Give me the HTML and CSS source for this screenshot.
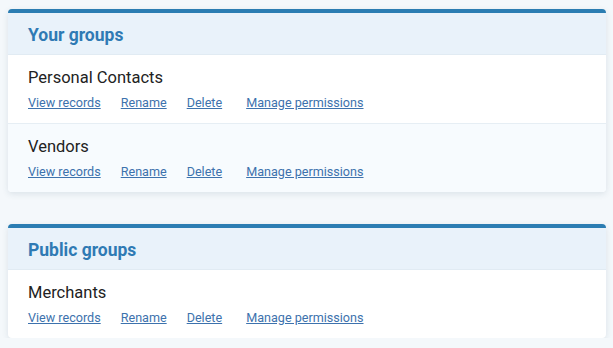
FILE: index.html
```html
<!DOCTYPE html>
<html lang="en">
<head>
    <meta charset="UTF-8">
    <meta name="viewport" content="width=device-width, initial-scale=1.0">
    <title>Groups</title>
    <link rel="stylesheet" href="styles.css">
</head>
<body>
    <div class="group-card">
        <h2 class="group-card-title">Your groups</h2>
        <div class="group-row">
            <div class="group-name">Personal Contacts</div>
            <div class="group-links">
                <a href="#">View records</a>
                <a href="#">Rename</a>
                <a href="#">Delete</a>
                <a href="#">Manage permissions</a>
            </div>
        </div>
        <div class="group-row alt">
            <div class="group-name">Vendors</div>
            <div class="group-links">
                <a href="#">View records</a>
                <a href="#">Rename</a>
                <a href="#">Delete</a>
                <a href="#">Manage permissions</a>
            </div>
        </div>
    </div>

    <div class="group-card">
        <h2 class="group-card-title">Public groups</h2>
        <div class="group-row">
            <div class="group-name">Merchants</div>
            <div class="group-links">
                <a href="#">View records</a>
                <a href="#">Rename</a>
                <a href="#">Delete</a>
                <a href="#">Manage permissions</a>
            </div>
        </div>
    </div>
</body>
</html>
```

FILE: styles.css
```css
body {
    font-family: Roboto, "Liberation Sans", sans-serif;
    background-color: #f4f8fb;
    margin: 0;
    padding: 9px 7px 0 8px;
}
.group-card {
    background-color: #fff;
    border-top: 4px solid #2b7db2;
    border-radius: 4px;
    box-shadow: 0 2px 6px rgba(40, 70, 100, 0.12);
    margin-bottom: 32px;
    overflow: hidden;
}
.group-card:last-child {
    margin-bottom: 0;
}
.group-card-title {
    margin: 0;
    padding: 11px 20px 8px;
    line-height: 22px;
    font-size: 17.5px;
    font-weight: bold;
    color: #2f7ab4;
    background-color: #e9f2fa;
    border-bottom: 1px solid #e1ebf3;
}
.group-row {
    padding: 13px 20px 12px;
    border-bottom: 1px solid #e6eef4;
}
.group-row:last-child {
    border-bottom: none;
}
.group-row.alt {
    background-color: #f7fbfe;
}
.group-name {
    font-size: 16.5px;
    line-height: 20px;
    color: #222;
    margin-bottom: 7px;
}
.group-links {
    display: flex;
    font-size: 12.6px;
    line-height: 16px;
}
.group-links a {
    color: #3d72ad;
    margin-right: 20px;
}
.group-links a:nth-child(3) {
    margin-right: 24px;
}
```
